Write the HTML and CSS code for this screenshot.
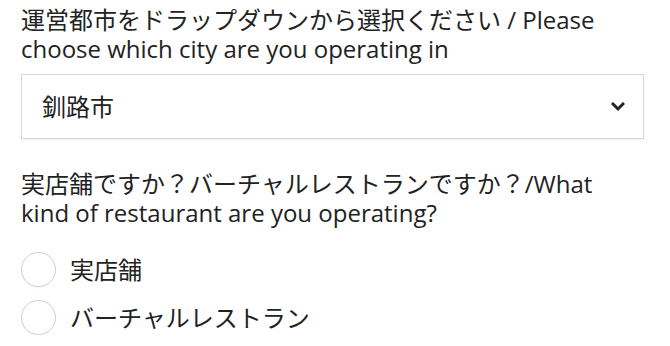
FILE: index.html
```html
<!DOCTYPE html>
<html lang="ja">
<head>
<meta charset="utf-8">
<link rel="stylesheet" href="styles.css">
</head>
<body>
<form class="form">
  <div class="field">
    <label class="label">運営都市をドラップダウンから選択ください / Please choose which city are you operating in</label>
    <div class="select">
      <span class="select-value">釧路市</span>
      <svg class="chevron" width="14" height="10" viewBox="0 0 14 10"><polyline points="2,2 7,7 12,2" fill="none" stroke="#222" stroke-width="3" stroke-linecap="square"/></svg>
    </div>
  </div>
  <div class="field field-radio">
    <div class="label">実店舗ですか？バーチャルレストランですか？/What kind of restaurant are you operating?</div>
    <div class="options">
      <label class="option"><span class="radio"></span><span class="option-text">実店舗</span></label>
      <label class="option"><span class="radio"></span><span class="option-text">バーチャルレストラン</span></label>
    </div>
  </div>
</form>
</body>
</html>
```
FILE: styles.css
```css
html, body {
  margin: 0;
  padding: 0;
  background: #fff;
}
body {
  font-family: "Open Sans", "Noto Sans CJK JP", sans-serif;
  color: #222;
  font-size: 24px;
  line-height: 29px;
}
.form {
  width: 623px;
  padding: 5px 0 0 21px;
}
.label {
  display: block;
  max-width: 610px;
}
.select {
  margin-top: 11px;
  height: 63px;
  border: 1px solid #d6d6d6;
  box-shadow: 0 1px 2px rgba(0,0,0,0.06);
  display: flex;
  align-items: center;
  justify-content: space-between;
  padding: 0 18px 0 20px;
}
.chevron {
  display: block;
}
.field-radio {
  margin-top: 30px;
}
.options {
  margin-top: 25px;
  display: flex;
  flex-direction: column;
  gap: 13px;
}
.option {
  display: flex;
  align-items: center;
  height: 35px;
}
.radio {
  width: 33px;
  height: 33px;
  border: 1px solid #cfcfcf;
  border-radius: 50%;
  box-shadow: 0 1px 2px rgba(0,0,0,0.05);
  flex: none;
}
.option-text {
  margin-left: 14px;
}
```
